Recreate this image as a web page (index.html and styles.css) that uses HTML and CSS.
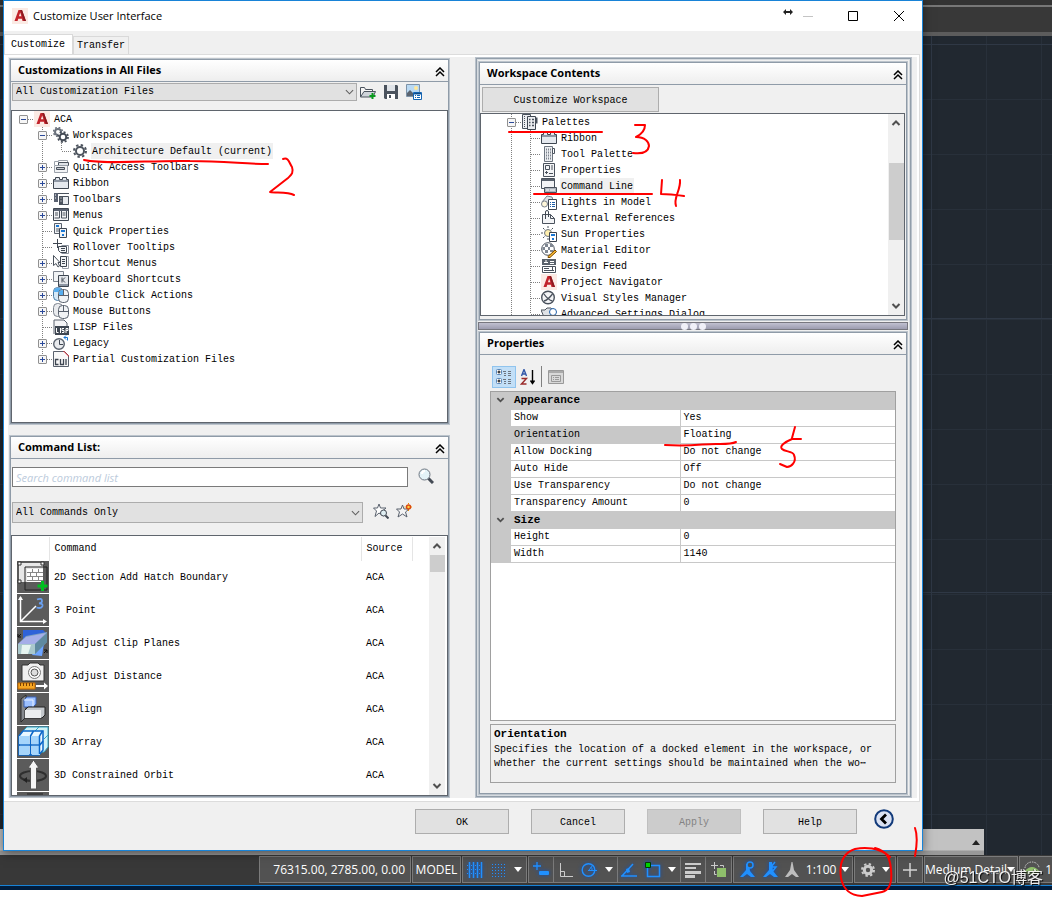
FILE: index.html
```html
<!DOCTYPE html>
<html lang="en">
<head>
  <meta charset="UTF-8">
  <title>Customize User Interface</title>
  <link rel="stylesheet" href="styles.css">
</head>
<body>

  <!-- shared icon shapes -->
  <svg class="sprite" aria-hidden="true">
    <symbol id="i-acad" viewBox="0 0 16 16"><rect width="16" height="16" fill="#fbeae4"/><path d="M2.500 13 6.500 2h3.500l4 11h-3.500l-.6-2.200H6.200L5.600 13zM6.900 8.300h2.500L8.200 4.500z" fill="#c2232b"/><path d="M8.200 2H10l4 11h-2z" fill="#8c1a20"/></symbol>
    <symbol id="i-gear" viewBox="0 0 16 16"><circle cx="8" cy="8" r="4" fill="none" stroke="#4d545e" stroke-width="2"/><circle cx="8" cy="8" r="6" fill="none" stroke="#4d545e" stroke-width="2" stroke-dasharray="2.4 2.310"/></symbol>
    <symbol id="i-chev" viewBox="0 0 10 10"><path d="M1 5l4-4 4 4M1 9l4-4 4 4" fill="none" stroke="#000" stroke-width="1.500"/></symbol>
    <symbol id="i-up" viewBox="0 0 10 10"><path d="M1.500 7 5 3.500 8.500 7" fill="none" stroke="#505050" stroke-width="2"/></symbol>
    <symbol id="i-down" viewBox="0 0 10 10"><path d="M1.500 3 5 6.500 8.500 3" fill="none" stroke="#505050" stroke-width="2"/></symbol>
    <symbol id="i-thin" viewBox="0 0 10 10"><path d="M1 3l4 4 4-4" fill="none" stroke="#606060" stroke-width="1.200"/></symbol>
    <symbol id="i-ribbon" viewBox="0 0 16 16"><path d="M.5 4.500h2v-2h4v2h3v-2h4v2h2v9H.5z" fill="#e4e8ee" stroke="#3e4651"/><path d="M1 5h14v2H1z" fill="#8d96a3"/></symbol>
    <symbol id="i-caret" viewBox="0 0 8 5"><path d="M0 0h8L4 5z" fill="#fff"/></symbol>
  </svg>

  <main class="workspace">
    <div class="app-top"></div>
    <div class="command-bar"><span class="tri"></span></div>

    <section class="dialog">
      <header class="titlebar">
        <svg class="ico"><use href="#i-acad"/></svg>
        <h1>Customize User Interface</h1>
        <svg class="resize" viewBox="0 0 10 8"><path d="M0 4l3-3v2h4V1l3 3-3 3V5H3v2z" fill="#222"/></svg>
        <button class="win" aria-label="Minimize"><svg viewBox="0 0 12 12"><path d="M1 6.500h10" stroke="#c4c4c4"/></svg></button>
        <button class="win" aria-label="Maximize"><svg viewBox="0 0 12 12"><path d="M1.500 1.500h9v9h-9z" fill="none" stroke="#000"/></svg></button>
        <button class="win" aria-label="Close"><svg viewBox="0 0 12 12"><path d="M1 1l10 10M11 1 1 11" stroke="#000"/></svg></button>
      </header>

      <nav class="tabs">
        <button class="tab active">Customize</button>
        <button class="tab">Transfer</button>
      </nav>

      <div class="page">
        <div class="columns">

          <div class="left-col">
            <section class="panel">
              <header class="panel-head"><h2>Customizations in All Files</h2><button aria-label="Collapse"><svg><use href="#i-chev"/></svg></button></header>
              <div class="file-bar">
                <div class="select"><select aria-label="Customization files"><option>All Customization Files</option></select><svg><use href="#i-thin"/></svg></div>
                <button class="tool" aria-label="Open"><svg viewBox="0 0 16 16"><path d="M.5 13V3.500h4l1 2h7v2" fill="#f4f4f4" stroke="#4a525d"/><path d="M.5 13 4 7.500h11.500L13 13z" fill="#cfd4da" stroke="#4a525d"/><path d="M12.500 9v6M9.500 12h6" stroke="#0a9a1e" stroke-width="2"/></svg></button>
                <button class="tool" aria-label="Save"><svg viewBox="0 0 16 16"><path d="M1 1h13l1 1v13H2l-1-1z" fill="#4a525d"/><path d="M4 1h8v6H4z" fill="#dfe3e8"/><path d="M4 10h8v5H4z" fill="#fff"/><path d="M6 11h2v3H6z" fill="#4a525d"/></svg></button>
                <button class="tool" aria-label="Image manager"><svg viewBox="0 0 16 16"><path d="M.5.5h13v12H.5z" fill="#b9d9f3" stroke="#7d93a8"/><path d="M1 9l3-3 4 4v2H1z" fill="#5b6470"/><circle cx="10" cy="4" r="2" fill="#ffe89a"/><path d="M7.500 8.500h8v7h-8z" fill="#fff" stroke="#1565b3"/><path d="M8 9h7v1H8zM9 11.500h1M11 11.500h3M9 13.500h1M11 13.500h3" stroke="#1565b3"/></svg></button>
              </div>
              <div class="tree">
                <ul>
                  <li>
                    <div class="node"><button class="toggle" aria-label="Collapse"></button><i></i><svg><use href="#i-acad"/></svg><span>ACA</span></div>
                    <ul>
                      <li>
                        <div class="node"><button class="toggle" aria-label="Collapse"></button><i></i><svg viewBox="0 0 16 16"><circle cx="5" cy="5" r="3" fill="none" stroke="#6b727d" stroke-width="2"/><circle cx="5" cy="5" r="4.500" fill="none" stroke="#6b727d" stroke-width="1.500" stroke-dasharray="1.800 1.734"/><circle cx="10" cy="10" r="5.500" fill="#fff"/><circle cx="10" cy="10" r="3.300" fill="none" stroke="#454c57" stroke-width="2"/><circle cx="10" cy="10" r="5" fill="none" stroke="#454c57" stroke-width="1.800" stroke-dasharray="2 1.927"/></svg><span>Workspaces</span></div>
                        <ul>
                          <li><div class="node leaf"><i></i><svg><use href="#i-gear"/></svg><span class="picked">Architecture Default (current)</span></div></li>
                        </ul>
                      </li>
                      <li><div class="node"><button class="toggle plus" aria-label="Expand"></button><i></i><svg viewBox="0 0 16 16"><path d="M1.500 6V2.500h4V1.500h9v4" fill="none" stroke="#9aa1aa"/><path d="M5.500 3.500h10v3h-10z" fill="#dfe3e8" stroke="#4a525d"/><path d="M1.500 6.500h13v7h-13z" fill="#f2f3f5" stroke="#9aa1aa"/><path d="M3.500 8.500h8v2h-8z" fill="#c5cad1" stroke="#4a525d"/></svg><span>Quick Access Toolbars</span></div></li>
                      <li><div class="node"><button class="toggle plus" aria-label="Expand"></button><i></i><svg><use href="#i-ribbon"/></svg><span>Ribbon</span></div></li>
                      <li><div class="node"><button class="toggle plus" aria-label="Expand"></button><i></i><svg viewBox="0 0 16 16"><path d="M1 2h4v9H1z" fill="#596170"/><path d="M5 2.500h11" stroke="#4a525d"/><path d="M6.500 5.500h9v8h-9z" fill="#e8ebef" stroke="#4a525d"/><path d="M6 5h4v9H6z" fill="#4a525d"/><path d="M2 4h1M2 7h1M7.500 7h1M7.500 10h1" stroke="#fff"/></svg><span>Toolbars</span></div></li>
                      <li><div class="node"><button class="toggle plus" aria-label="Expand"></button><i></i><svg viewBox="0 0 16 16"><path d="M.5 1.500h15v12H.5z" fill="#f3f4f6" stroke="#3e4651"/><path d="M1 2h14v2H1z" fill="#596170"/><path d="M6.500 4v7h-5M8.500 4v7h5V4M2 6h3M2 8h3M9.500 6h3M9.500 8h3" fill="none" stroke="#4a525d"/></svg><span>Menus</span></div></li>
                      <li><div class="node leaf"><i></i><svg viewBox="0 0 16 16"><path d="M1.500.5h7v10h-7z" fill="#f1f3f5" stroke="#59616d"/><path d="M3 2h3v2H3z" fill="#1976d2"/><path d="M3 6h3M3 8h3" stroke="#59616d"/><path d="M6.500 5.500h7v9h-7z" fill="#f1f3f5" stroke="#3e4651"/><path d="M8 7h4v2H8zM9 11h2v2H9z" fill="#1976d2"/></svg><span>Quick Properties</span></div></li>
                      <li><div class="node leaf"><i></i><svg viewBox="0 0 16 16"><path d="M4.500 0v9M0 4.500h9" stroke="#3e4651"/><path d="M8.500 6.500h7v8h-7" fill="#fff" stroke="#8a919c"/><path d="M5.500 7.500h8v6h-6l-2-2z" fill="#f1f3f5" stroke="#3e4651"/><path d="M8 9.500h4M8 11.500h4" stroke="#3e4651"/></svg><span>Rollover Tooltips</span></div></li>
                      <li><div class="node"><button class="toggle plus" aria-label="Expand"></button><i></i><svg viewBox="0 0 16 16"><path d="M.5.5v10l2.500-2 2 3.500 1.500-1-1.500-3.500h2z" fill="#fff" stroke="#4a525d"/><path d="M9.500 1.500h6v12h-6z" fill="#fff" stroke="#9aa1aa"/><path d="M7.500 1.500h6v10h-6z" fill="#f1f3f5" stroke="#3e4651"/><path d="M9 4.500h3M9 6.500h3M9 8.500h3" stroke="#3e4651"/></svg><span>Shortcut Menus</span></div></li>
                      <li><div class="node"><button class="toggle plus" aria-label="Expand"></button><i></i><svg viewBox="0 0 16 16"><path d="M.5.500h10v10H.5z" fill="#f1f3f5" stroke="#7b828d"/><path d="M5.500 4.500h10v11h-10z" fill="#e4e7eb" stroke="#3e4651"/><path d="M6 13h9v2H6z" fill="#8d96a3"/><path d="M9 6.500v5M12 6.500 9.500 9l2.500 2.500" fill="none" stroke="#3e4651"/></svg><span>Keyboard Shortcuts</span></div></li>
                      <li><div class="node"><button class="toggle plus" aria-label="Expand"></button><i></i><svg viewBox="0 0 16 16"><rect x=".5" y=".5" width="9" height="13" rx="4" fill="#d5e9f8" stroke="#4a7ba5"/><path d="M1 5a4 4 0 0 1 8 0z" fill="#56aef0"/><rect x="5.500" y="2.500" width="10" height="13" rx="4" fill="#f1f3f5" stroke="#59616d"/><path d="M6 8V6a4 3 0 0 1 4-3v5z" fill="#56aef0"/><path d="M6 8.500h9M10.500 3v5" stroke="#59616d"/></svg><span>Double Click Actions</span></div></li>
                      <li><div class="node"><button class="toggle plus" aria-label="Expand"></button><i></i><svg viewBox="0 0 16 16"><rect x=".5" y=".5" width="9" height="13" rx="4" fill="#e9ebee" stroke="#7b828d"/><rect x="5.500" y="2.500" width="10" height="13" rx="4" fill="#f1f3f5" stroke="#59616d"/><path d="M6 8.500h9M10.500 3v5" stroke="#59616d"/></svg><span>Mouse Buttons</span></div></li>
                      <li><div class="node leaf"><i></i><svg viewBox="0 0 16 16"><path d="M1 15V1h10l3 3v3" fill="#f4f4f6" stroke="#59616d"/><path d="M2 7h14v9H2z" fill="#3e4651"/><path d="M3.500 9v4.500h2M7.500 9v5M11 9.500H9v2h2v2H9M13 14V9.500h2v2h-2" fill="none" stroke="#fff"/></svg><span>LISP Files</span></div></li>
                      <li><div class="node"><button class="toggle plus" aria-label="Expand"></button><i></i><svg viewBox="0 0 16 16"><circle cx="6" cy="9" r="5.300" fill="#e9ebee" stroke="#59616d" stroke-width="1.400"/><path d="M6.500 5v4.500H10" fill="none" stroke="#3e4651"/><path d="M11 2.500h3.500v3M13 .500l-2 2 2 2" fill="none" stroke="#1976d2"/></svg><span>Legacy</span></div></li>
                      <li><div class="node"><button class="toggle plus" aria-label="Expand"></button><i></i><svg viewBox="0 0 16 16"><path d="M.5.5h11l4 4v11H.5z" fill="#f8f8f8" stroke="#59616d"/><path d="M10 0h1l5 5v1z" fill="#e02633"/><path d="M5.500 8.500h-3v5h3M7.500 8v5.500h3V8M13 8v6" fill="none" stroke="#3e4651" stroke-width="1.300"/></svg><span>Partial Customization Files</span></div></li>
                    </ul>
                  </li>
                </ul>
              </div>
            </section>

            <section class="panel">
              <header class="panel-head"><h2>Command List:</h2><button aria-label="Collapse"><svg><use href="#i-chev"/></svg></button></header>
              <div class="search-bar">
                <input type="text" placeholder="Search command list" aria-label="Search command list">
                <button class="tool" aria-label="Search"><svg viewBox="0 0 16 16"><path d="M10 10l5 5" stroke="#444b55" stroke-width="3"/><circle cx="6.500" cy="6.500" r="5.500" fill="#e3f3f8" stroke="#6d7580"/><path d="M4 6a3 3 0 0 1 3-3" fill="none" stroke="#fff" stroke-width="2"/></svg></button>
              </div>
              <div class="filter-bar">
                <div class="select"><select aria-label="Command category"><option>All Commands Only</option></select><svg><use href="#i-thin"/></svg></div>
                <button class="tool" aria-label="Find command"><svg viewBox="0 0 16 16"><path d="M6 1l1.500 4H13L9.500 8l1 5L6 10l-4 3.500L3.500 8 .5 5h4z" fill="#fff" stroke="#59616d"/><circle cx="10.500" cy="10" r="3" fill="#dfeef2" stroke="#444b55"/><path d="M12.500 12.500l3 3" stroke="#444b55" stroke-width="2"/></svg></button>
                <button class="tool" aria-label="New command"><svg viewBox="0 0 16 16"><path d="M6.500 2l1.500 4h5L9.500 9l1.500 5-4.500-3L2 14l1.500-5L.5 6H5z" fill="#f4f4f4" stroke="#59616d"/><circle cx="12.500" cy="4" r="2" fill="#ffd23e" stroke="#d9480f" stroke-width="1.500"/><path d="M12.500 0v1M12.500 7v1M8.500 4h1M15 4h1" stroke="#f08c00"/></svg></button>
              </div>
              <div class="list">
                <div class="list-view">
                  <table>
                    <thead>
                      <tr><th class="c-icon"></th><th>Command</th><th class="c-src">Source</th><th class="c-end"></th></tr>
                    </thead>
                    <tbody>
                      <tr><td><svg viewBox="0 0 32 32"><path d="M2 2h24v19H2z" fill="#e8e8e8"/><path d="M1 1h3v3H1zM24 1h3v3h-3zM1 19h3v3H1z" fill="#fff" stroke="#333"/><path d="M8 6h22v23H8z" fill="none" stroke="#222"/><path d="M10 8h16v13H10z" fill="#fff"/><path d="M10 11.500h16M10 15.500h16M10 19.500h16M15.500 8v3M21.500 8v3M13.500 12v3M19.500 12v3M15.500 16v3M21.500 16v3" stroke="#888"/><path d="M25.500 20v10M20.500 25h10" stroke="#00c020" stroke-width="3"/></svg></td><td>2D Section Add Hatch Boundary</td><td>ACA</td><td></td></tr>
                      <tr><td><svg viewBox="0 0 32 32"><path d="M3.500 3v24.500H28M4 27 19 12" fill="none" stroke="#fff" stroke-width="1.500"/><path d="M1 6l2.500-4L6 6zM26 25l4 2.500-4 2.500z" fill="#fff"/><path d="M20 5.500q5-2 5 1.500 0 2-3 2.300 4 .2 3.500 2.700-1 3-6 1.500" fill="none" stroke="#6aa0f0" stroke-width="1.800"/></svg></td><td>3 Point</td><td>ACA</td><td></td></tr>
                      <tr><td><svg viewBox="0 0 32 32"><path d="M6 3h20l3 3-4 22-10-1V12H6z" fill="#2f62d8"/><path d="M15 28l10 1 2-14-7 4z" fill="#6da5ff"/><path d="M1 17 9 9l21-4v10L18 27H1z" fill="#7d9fc0"/><path d="M1 17h17v10H1z" fill="#a9c8cc"/><path d="M1 17 9 10l20-4-11 11z" fill="#a5aee8"/><path d="M18 17 30 6v9L18 27z" fill="#5f8aa0"/><path d="M5 18h9l-3 9H4z" fill="#e6f4f0"/><path d="M4 7 1 10m0-3v3h3M27 26l3-3m0 3v-3h-3" fill="none" stroke="#111"/></svg></td><td>3D Adjust Clip Planes</td><td>ACA</td><td></td></tr>
                      <tr><td><svg viewBox="0 0 32 32"><path d="M5 5h6l2-2h8l2 2h4v16H5z" fill="#f0f0f0" stroke="#333"/><circle cx="17.500" cy="12.500" r="6" fill="#fff" stroke="#777"/><circle cx="17.500" cy="12.500" r="3.500" fill="#ddd" stroke="#555"/><path d="M1 23h17v6H1z" fill="#f5a623" stroke="#c46b00"/><path d="M3.500 23v3M6.500 23v3M9.500 23v3M12.500 23v3M15.500 23v3" stroke="#7a3f00"/><path d="M19 26h10" stroke="#fff" stroke-width="2"/><path d="M27 22.500l4 3.500-4 3.500z" fill="#fff"/></svg></td><td>3D Adjust Distance</td><td>ACA</td><td></td></tr>
                      <tr><td><svg viewBox="0 0 32 32"><path d="M4 6l5-4v22l-5 5z" fill="#85898e" stroke="#2b2b2b"/><path d="M7 7l3-3h9v7l-3 3H7z" fill="#9cc0ff" stroke="#3b62b8"/><path d="M7 7h9v7" fill="none" stroke="#e8f0ff"/><path d="M8 17l3-3h17v8l-3 3H8z" fill="#c4c8cc" stroke="#222"/><path d="M8 17h16v8H8z" fill="#eceeef"/></svg></td><td>3D Align</td><td>ACA</td><td></td></tr>
                      <tr><td><svg viewBox="0 0 32 32"><path d="M6 5l4-4h21v20l-4 5H10z" fill="#cff1f5" stroke="#31a5c8"/><path d="M18 5l4-4M27 13l4-4" stroke="#31a5c8"/><path d="M2 10l4-5h20v19l-4 5H2z" fill="#e9f7ff" stroke="#0a66c8" stroke-width="1.500"/><path d="M2 10h10v8H2zM15 10h8v8h-8zM2 20h10v9H2zM15 20h8v9h-8z" fill="#a5d5fb"/><path d="M2 19h21l3-4M13.500 29V10l3-5M22.500 28V10l3-5" fill="none" stroke="#0a66c8" stroke-width="1.500"/></svg></td><td>3D Array</td><td>ACA</td><td></td></tr>
                      <tr><td><svg viewBox="0 0 32 32"><ellipse cx="16" cy="17" rx="13" ry="5" fill="none" stroke="#2f2f2f" stroke-width="2"/><path d="M13.500 30V9H11l5.500-8L22 9h-2.500v21z" fill="#f5f5f5" stroke="#555"/><path d="M6 21l4-3v6z" fill="#222"/></svg></td><td>3D Constrained Orbit</td><td>ACA</td><td></td></tr>
                      <tr><td><svg viewBox="0 0 32 32"><path d="M10 2h16" stroke="#222"/></svg></td><td></td><td></td><td></td></tr>
                    </tbody>
                  </table>
                </div>
                <div class="scroll cmd-scroll"><svg><use href="#i-up"/></svg><div class="thumb"></div><svg><use href="#i-down"/></svg></div>
              </div>
            </section>
          </div>

          <div class="right-col">
            <section class="panel contents">
              <header class="panel-head"><h2>Workspace Contents</h2><button aria-label="Collapse"><svg><use href="#i-chev"/></svg></button></header>
              <button class="btn wide">Customize Workspace</button>
              <div class="tree palettes">
                <ul>
                  <li>
                    <div class="node"><button class="toggle" aria-label="Collapse"></button><i></i><svg viewBox="0 0 16 16"><path d="M.5.5h8v14h-8z" fill="#eceef1" stroke="#4a525d"/><path d="M2.500 2v11" stroke="#4a525d" stroke-dasharray="1 1"/><path d="M5.500 2.500h8v13h-8z" fill="#eceef1" stroke="#3e4651"/><path d="M13.500 3.500h2v6h-2z" fill="#4a525d"/><path d="M7 5.500h1.500M10 5.500h2M7 8.500h1.500M10 8.500h2M7 11.500h1.500M10 11.500h2" stroke="#4a525d" stroke-width="1.500"/></svg><span>Palettes</span></div>
                    <ul>
                      <li><div class="node leaf"><i></i><svg><use href="#i-ribbon"/></svg><span>Ribbon</span></div></li>
                      <li><div class="node leaf"><i></i><svg viewBox="0 0 16 16"><path d="M3.500.5h8v15h-8z" fill="#eceef1" stroke="#6d7580"/><path d="M11.500 2.500h2v5h-2z" fill="#fff" stroke="#4a525d"/><path d="M5 3.500h1M7 3.500h1M9 3.500h1M5 6.500h1M7 6.500h1M9 6.500h1M5 9.500h1M7 9.500h1M9 9.500h1M5 12.500h1M7 12.500h1M9 12.500h1" stroke="#7b828d" stroke-width="2"/></svg><span>Tool Palette</span></div></li>
                      <li><div class="node leaf"><i></i><svg viewBox="0 0 16 16"><path d="M2.500 1.500h11v13h-11z" fill="#f3f4f6" stroke="#4a525d"/><path d="M4.500 3.500h4v4h-4zM11 3v5M4 10.500h3M5.500 9v3M8 11.500h4" fill="none" stroke="#4a525d"/></svg><span>Properties</span></div></li>
                      <li><div class="node leaf"><i></i><svg viewBox="0 0 16 16"><path d="M.5.5h13v10H.5z" fill="#f3f4f6" stroke="#4a525d"/><path d="M1 1h12v2H1z" fill="#59616d"/><path d="M3.500 9.500h12v5h-12z" fill="#aeb4bd" stroke="#4a525d"/><path d="M5 12h3M9 12h5" stroke="#fff"/></svg><span class="picked">Command Line</span></div></li>
                      <li><div class="node leaf"><i></i><svg viewBox="0 0 16 16"><path d="M1 8l5-6 5 1 1 3-7 5z" fill="#dfe2e6" stroke="#7b828d"/><circle cx="3.500" cy="10" r="3" fill="#fff7da" stroke="#7b828d"/><path d="M7.500 5.500h8v10h-8z" fill="#fff" stroke="#3e4651"/><path d="M9 8.500h1M11 8.500h3M9 10.500h1M11 10.500h3M9 12.500h1M11 12.500h3" stroke="#1f5fa8"/></svg><span>Lights in Model</span></div></li>
                      <li><div class="node leaf"><i></i><svg viewBox="0 0 16 16"><path d="M1.500 4.500h8l4 4v5h-12z" fill="#f3f4f6" stroke="#4a525d"/><path d="M9.500 4.500v4h4" fill="none" stroke="#4a525d"/><path d="M4.500 9V2a1.500 1.500 0 0 1 3 0v5" fill="none" stroke="#3e4651"/></svg><span>External References</span></div></li>
                      <li><div class="node leaf"><i></i><svg viewBox="0 0 16 16"><circle cx="7" cy="7" r="3.500" fill="#ffefae" stroke="#6d7580"/><path d="M7 0v2M0 7h2M2 2l1.500 1.500M12 2l-1.500 1.500M2 12l1.500-1.500M7 12v2" stroke="#4a525d"/><path d="M8.500 6.500h7v9h-7z" fill="#fff" stroke="#3e4651"/><path d="M10 8h4v2h-4zM11 12h2v2h-2z" fill="#1976d2"/></svg><span>Sun Properties</span></div></li>
                      <li><div class="node leaf"><i></i><svg viewBox="0 0 16 16"><circle cx="7" cy="7" r="6.300" fill="#fff" stroke="#4a525d"/><path d="M4 2h3v3H4zM9 2h3v3H9zM1.500 5H4v3H1.500zM7 5h2v3H7zM4 8h3v3H4zM9 8h3v2H9z" fill="#7f8792"/><path d="M7 14.500 14 8l1.500 1.500L9 15.500H7z" fill="#f7b733" stroke="#7a4b00"/></svg><span>Material Editor</span></div></li>
                      <li><div class="node leaf"><i></i><svg viewBox="0 0 16 16"><path d="M1 1h14v6H1z" fill="#59616b"/><path d="M3 4.500h4M5 2v3M9 3.500h4M9 5.500h4" stroke="#fff"/><path d="M1.500 8.500h13v6h-13z" fill="#fff" stroke="#4a525d"/><path d="M3 10.500h5M3 12.500h10M11.500 9v3" stroke="#4a525d"/></svg><span>Design Feed</span></div></li>
                      <li><div class="node leaf"><i></i><svg><use href="#i-acad"/></svg><span>Project Navigator</span></div></li>
                      <li><div class="node leaf"><i></i><svg viewBox="0 0 16 16"><circle cx="7" cy="7.500" r="6.300" fill="#f3f4f6" stroke="#4a525d" stroke-width="1.400"/><path d="M3 4q4 6 8.500 7M11.500 4Q7 10 3 11" fill="none" stroke="#4a525d" stroke-width="1.300"/></svg><span>Visual Styles Manager</span></div></li>
                      <li><div class="node leaf"><i></i><svg viewBox="0 0 16 16"><path d="M0 4h4l2-2h4l3 3v6H3z" fill="#dfe2e6" stroke="#4a525d"/><circle cx="12" cy="6" r="3.500" fill="#fff" stroke="#1f5fa8"/></svg><span>Advanced Settings Dialog</span></div></li>
                    </ul>
                  </li>
                  <li><div class="node leaf"><i></i></div></li>
                </ul>
                <div class="scroll tree-scroll"><svg><use href="#i-up"/></svg><div class="thumb"></div><svg><use href="#i-down"/></svg></div>
              </div>
            </section>

            <div class="splitter"><b></b><b></b><b></b></div>

            <section class="panel props">
              <header class="panel-head"><h2>Properties</h2><button aria-label="Collapse"><svg><use href="#i-chev"/></svg></button></header>
              <div class="props-body">
                <div class="props-tools">
                  <button class="on" aria-label="Categorized"><svg viewBox="0 0 16 16"><rect x=".5" y=".5" width="5" height="5" rx="1" fill="#fff" stroke="#5b87b8"/><rect x=".5" y="9.500" width="5" height="5" rx="1" fill="#fff" stroke="#5b87b8"/><path d="M1.500 3h3M3 1.500v3M1.500 12h3M3 10.500v3" stroke="#000"/><path d="M7 2.500h3M12 2.500h3M8 4.500h2M12 4.500h3M8 6.500h2M12 6.500h3M7 10.500h3M12 10.500h3M8 12.500h2M12 12.500h3M8 14.500h2M12 14.500h3" stroke="#6d7580"/></svg></button>
                  <button aria-label="Alphabetical"><svg viewBox="0 0 16 16"><path d="M1.500 7 4 .5 6.500 7M2.500 5h3" fill="none" stroke="#3156a8" stroke-width="1.400"/><path d="M1.500 9.500h5l-5 5.500h5" fill="none" stroke="#9a2b2b" stroke-width="1.400"/><path d="M12.500 1v13M10.500 11.500l2 3 2-3" fill="none" stroke="#000" stroke-width="1.400"/></svg></button>
                  <span class="sep"></span>
                  <button aria-label="Property pages" disabled><svg viewBox="0 0 16 16"><path d="M.5 1.500h15v13H.5z" fill="#d8d8d8" stroke="#999"/><path d="M1 2h14v2H1z" fill="#aaa"/><path d="M3.500 6.500h9v6h-9zM5 8.500h1M7 8.500h4M5 10.500h1M7 10.500h4" fill="none" stroke="#999"/></svg></button>
                </div>
                <div class="prop-grid">
                  <table>
                    <colgroup><col class="p-mark"><col class="p-name"><col></colgroup>
                    <tr class="cat"><td><svg><use href="#i-down"/></svg></td><th colspan="2">Appearance</th></tr>
                    <tr><td></td><th>Show</th><td>Yes</td></tr>
                    <tr class="current"><td></td><th>Orientation</th><td>Floating</td></tr>
                    <tr><td></td><th>Allow Docking</th><td>Do not change</td></tr>
                    <tr><td></td><th>Auto Hide</th><td>Off</td></tr>
                    <tr><td></td><th>Use Transparency</th><td>Do not change</td></tr>
                    <tr><td></td><th>Transparency Amount</th><td>0</td></tr>
                    <tr class="cat"><td><svg><use href="#i-down"/></svg></td><th colspan="2">Size</th></tr>
                    <tr><td></td><th>Height</th><td>0</td></tr>
                    <tr><td></td><th>Width</th><td>1140</td></tr>
                  </table>
                </div>
                <div class="prop-help">
                  <h3>Orientation</h3>
                  <p>Specifies the location of a docked element in the workspace, or<br>whether the current settings should be maintained when the wo⋯</p>
                </div>
              </div>
            </section>
          </div>

        </div>
      </div>

      <footer class="actions">
        <button class="btn">OK</button>
        <button class="btn">Cancel</button>
        <button class="btn" disabled>Apply</button>
        <button class="btn">Help</button>
        <button class="round" aria-label="Less"><svg viewBox="0 0 20 20"><circle cx="10" cy="10" r="8.800" fill="#dbe2f3" stroke="#123a7a" stroke-width="2"/><path d="M12 5.500 7.500 10l4.500 4.500" fill="none" stroke="#000" stroke-width="2.800"/></svg></button>
      </footer>
    </section>
  </main>

  <footer class="status">
    <div class="cell coords">76315.00, 2785.00, 0.00</div>
    <div class="cell model">MODEL</div>
    <div class="cell grids">
      <svg class="glow" viewBox="0 0 16 16"><path d="M2.500 0v16M6.500 0v16M10.500 0v16M14.500 0v16" stroke="#2090ff" stroke-width="1.500"/><path d="M0 3.500h16M0 7.500h16M0 11.500h16" stroke="#2090ff" stroke-dasharray="1 1"/></svg>
      <svg class="glow" viewBox="0 0 16 16"><path d="M1 2.500h14M1 5.500h14M1 8.500h14M1 11.500h14M1 14.500h14" stroke="#2090ff" stroke-dasharray="1 2"/></svg>
      <svg class="caret"><use href="#i-caret"/></svg>
    </div>
    <div class="cell tools">
      <span class="t1"><svg class="glow" viewBox="0 0 16 16"><path d="M4 0v8M0 4h8" stroke="#2090ff" stroke-width="1.300"/><rect x="6" y="9" width="10" height="4" rx="1" fill="#2090ff"/></svg></span>
      <span class="t2"><svg viewBox="0 0 16 16"><path d="M2.500 1v13.500H15M2.500 9.500h4v5" fill="none" stroke="#ccc"/></svg><svg class="glow" viewBox="0 0 16 16"><circle cx="7.500" cy="8" r="6.300" fill="none" stroke="#2090ff" stroke-width="1.400"/><path d="M7 8.500h9M8 8l4-5M9.500 5q2 1 1.500 3.500" fill="none" stroke="#2090ff"/></svg><svg class="caret"><use href="#i-caret"/></svg></span>
      <span class="t3"><svg class="glow" viewBox="0 0 16 16"><path d="M0 14h16M1 14 12 2" stroke="#2090ff" stroke-width="1.500"/><path d="M5 7l3-1 1 4-3 1z" fill="#2090ff"/></svg><svg class="glow" viewBox="0 0 16 16"><path d="M2.500 3.500h12v11h-12z" fill="none" stroke="#2090ff" stroke-width="1.500"/><path d="M.5.5h5v5h-5z" fill="#00d000" stroke="#003a00"/></svg><svg class="caret"><use href="#i-caret"/></svg></span>
      <span class="t1"><svg viewBox="0 0 16 16"><path d="M0 2h16M0 6h11" stroke="#ccc" stroke-width="2"/><path d="M0 10.500h16M0 14.500h10" stroke="#ccc" stroke-width="3"/></svg></span>
      <span class="t1"><svg viewBox="0 0 16 16"><path d="M3.500 0v7M0 3.500h7M9 3.500h3.500v2M3.500 9v3.500h2" fill="none" stroke="#ccc"/><path d="M6 6h9v9H6z" fill="#8fbf6b"/></svg></span>
    </div>
    <div class="cell scale">
      <svg class="glow" viewBox="0 0 18 18"><path d="M8 3v6l-6 7h3l4-3 4 3h4l-5-6-1-7z" fill="#2090ff"/><circle cx="12" cy="4" r="3" fill="#44505c" stroke="#2090ff" stroke-width="1.500"/></svg>
      <svg class="glow" viewBox="0 0 18 18"><path d="M8 1v8l-6 7h3l4-3 4 3h4l-5-6-1-9z" fill="#2090ff"/><path d="M14 1l-4 5h5l-4 5" fill="none" stroke="#2090ff" stroke-width="1.500"/></svg>
      <svg viewBox="0 0 18 18"><path d="M8.500 1 7 9l-5 7h3l4-3 4 3h3l-5-7-1.500-8z" fill="#bdbdbd"/></svg>
      <span>1:100</span>
      <svg class="caret"><use href="#i-caret"/></svg>
    </div>
    <div class="cell switch">
      <svg viewBox="0 0 16 16"><circle cx="8" cy="8" r="3.700" fill="none" stroke="#ccc" stroke-width="3"/><circle cx="8" cy="8" r="6" fill="none" stroke="#ccc" stroke-width="2" stroke-dasharray="2.400 2.310"/></svg>
      <svg class="caret"><use href="#i-caret"/></svg>
    </div>
    <div class="cell add"><svg viewBox="0 0 16 16"><path d="M8 1v14M1 8h14" stroke="#d4d4d4" stroke-width="1.500"/></svg></div>
    <div class="cell detail"><span>Medium Detail</span><svg class="caret"><use href="#i-caret"/></svg></div>
    <div class="cell isolate"><svg viewBox="0 0 18 18"><path d="M2 7a7 6 0 0 1 14 0" fill="none" stroke="#ccc" stroke-dasharray="1.500 1"/><path d="M1 11q8-10 16 0-8 5-16 0z" fill="#8fbf6b"/></svg><span>1</span></div>
  </footer>
  <div class="taskbar"></div>

  <!-- hand-drawn marks -->
  <svg class="marks" viewBox="0 0 1052 897" fill="none" stroke="#f00" stroke-width="2" stroke-linecap="round" stroke-linejoin="round">
    <path d="M84 160C110 165 150 160 190 161 225 161 245 164 268 164"/>
    <path d="M283 159C289 157 289 163 292 167 294 173 291 175 288 178L270 192C276 193 288 192 294 195"/>
    <path d="M509 132H602M534 194H652"/>
    <path d="M635 125H645C645 130 642 134 636 137 645 137 649 142 649 146 648 153 641 154 633 153"/>
    <path d="M662 180 661 194C669 194 677 195 684 196M680 180C681 190 673 198 676 206"/>
    <path d="M665 445C695 447 705 443 720 444 728 444 732 444 736 442"/>
    <path d="M795 427 792 438M801 439H792C785 442 779 446 782 449 785 452 793 451 794 455 797 462 791 467 787 467L780 464"/>
    <path d="M915 828C918 836 917 845 915 856"/>
    <path d="M875 848C885 851 890 855 891 870 892 880 891 890 882 892L862 896C848 895 843 888 841 878 839 864 843 853 855 849 864 847 880 847 890 857"/>
  </svg>
  <div class="watermark">@51CTO博客</div>

</body>
</html>
```

FILE: styles.css
```css
* {
  box-sizing: border-box;
}
body {
  margin: 0;
  height: 100vh;
  padding-bottom: 7px;
  display: flex;
  flex-direction: column;
  position: relative;
  overflow: hidden;
  background: #fff;
  color: #000;
  font: 10px/16px 'Liberation Mono', monospace;
}
h1, h2, h3, p, ul {
  margin: 0;
  padding: 0;
}
ul {
  list-style: none;
}
button {
  padding: 0;
  border: 0;
  background: none;
  color: inherit;
  font: inherit;
}
svg {
  display: block;
  flex: none;
  width: 16px;
  height: 16px;
}
.sprite {
  position: absolute;
  width: 0;
  height: 0;
}
table {
  border-collapse: collapse;
  table-layout: fixed;
  width: 100%;
}
th, td {
  padding: 0;
  text-align: left;
  font-weight: normal;
}

/* drawing area behind the dialog */
.workspace {
  flex: 1;
  min-height: 0;
  position: relative;
  display: flex;
  flex-direction: column;
  justify-content: space-between;
  background-color: #212830;
  background-image:
    linear-gradient(#2f3845 1px, transparent 1px),
    linear-gradient(90deg, #2f3845 1px, transparent 1px),
    linear-gradient(#28303a 1px, transparent 1px),
    linear-gradient(90deg, #28303a 1px, transparent 1px);
  background-size: 100% 274px, 274px 100%, 100% 55px, 55px 100%;
  background-position: 0 44px, 109px 0, 0 44px, 51px 0;
}
.app-top {
  height: 36px;
  border-bottom: 4px solid #5c5c5c;
  background: linear-gradient(#333 5px, #777 5px, #777 7px, #383838 7px);
}
.command-bar {
  height: 26px;
  margin-right: 68px;
  display: flex;
  align-items: center;
  justify-content: flex-end;
  padding-right: 4px;
  background: linear-gradient(#c2c2c2 21px, #999 22px);
}
.tri {
  border: 4px solid transparent;
  border-bottom: 5px solid #222;
  border-top: 0;
}

/* dialog window */
.dialog {
  position: absolute;
  top: 0;
  left: 3px;
  right: 129px;
  bottom: 4px;
  display: flex;
  flex-direction: column;
  border: 1px solid #1883d7;
  background: #f0f0f0;
  box-shadow: 0 2px 10px rgba(0, 0, 0, 0.5);
}
.titlebar {
  height: 30px;
  flex: none;
  display: flex;
  align-items: center;
  padding-left: 8px;
  background: #fff;
}
.titlebar h1 {
  flex: 1;
  margin-left: 5px;
  font: 11px/16px 'Open Sans', sans-serif;
}
.titlebar .resize {
  width: 10px;
  height: 8px;
  margin-bottom: 8px;
}
.win {
  width: 46px;
  display: flex;
  justify-content: center;
}
.win svg {
  width: 12px;
  height: 12px;
}
.win:first-of-type {
  width: 30px;
  margin-right: 7px;
}
.tabs {
  height: 23px;
  flex: none;
  display: flex;
  align-items: flex-end;
}
.tab {
  height: 18px;
  padding: 0 3px;
  border: 1px solid #d9d9d9;
  border-bottom: 0;
}
.tab.active {
  height: 20px;
  padding: 0 7px 0 6px;
  background: #fff;
}
.page {
  flex: 1;
  min-height: 0;
  margin-right: 2px;
  padding: 2px 2px 3px 4px;
  border: 1px solid #dcdcdc;
  border-left: 0;
  background: #fff;
}
.columns {
  height: 100%;
  display: grid;
  grid-template-columns: 441fr 437fr;
  grid-template-rows: 100%;
  gap: 25px;
  padding: 0 5px 0 1px;
  background: #f0f0f0;
}
.left-col {
  min-height: 0;
  display: grid;
  grid-template-rows: 367fr 363fr;
  gap: 10px;
  padding-top: 1px;
}
.right-col {
  min-width: 0;
  display: flex;
  flex-direction: column;
  gap: 1px;
  padding: 3px 3px 2px 2px;
  border: 1px solid #b9c1ca;
  box-shadow: inset 0 0 0 1px #929eaa, inset 0 0 0 2px #d6dbe0;
}
.panel {
  min-height: 0;
  display: flex;
  flex-direction: column;
  padding: 1px;
  border: 1px solid #bcc4cc;
  box-shadow: inset 0 0 0 1px #8f9ba8;
}
.panel-head {
  height: 22px;
  flex: none;
  display: flex;
  align-items: center;
  justify-content: space-between;
  padding: 0 3px 2px 7px;
  border-bottom: 1px solid #8f9ba8;
  background: linear-gradient(#fff, #eee);
}
.panel-head h2 {
  font: bold 11px/16px 'Open Sans', sans-serif;
}
.panel-head svg {
  width: 10px;
  height: 10px;
  margin-top: 4px;
}
.contents {
  flex: 259;
}
.props {
  flex: 465;
}

/* drop-downs and small tool buttons */
.file-bar, .search-bar, .filter-bar {
  flex: none;
  display: flex;
  align-items: flex-start;
}
.file-bar {
  height: 28px;
  padding: 1px 26px 0 1px;
  gap: 7px;
}
.select {
  flex: 1;
  position: relative;
  margin-right: -4px;
}
.select select {
  appearance: none;
  display: block;
  width: 100%;
  height: 18px;
  padding: 0 0 0 3px;
  border: 1px solid #acacac;
  border-radius: 0;
  background: #e1e1e1;
  color: #000;
  font: inherit;
}
.select svg {
  position: absolute;
  top: 4px;
  right: 3px;
  width: 9px;
  height: 10px;
}
.tool {
  margin-top: 1px;
}
.search-bar {
  margin-top: 8px;
  padding: 0 14px 0 1px;
  gap: 10px;
}
.search-bar input {
  flex: 1;
  height: 20px;
  padding: 0 3px;
  border: 1px solid #7a7a7a;
  background: #fff;
  font: italic 11px/16px 'Open Sans', sans-serif;
}
.search-bar input::placeholder {
  color: #bccbdc;
}
.filter-bar {
  margin: 15px 0 12px;
  padding: 0 36px 0 1px;
  gap: 7px;
}
.filter-bar .select {
  margin-right: 3px;
}
.filter-bar select {
  height: 21px;
}
.filter-bar .select svg {
  top: 6px;
}

/* trees */
.tree {
  flex: 1;
  min-height: 0;
  position: relative;
  overflow: hidden;
  padding-left: 7px;
  border: 1px solid #5f656d;
  background: #fff;
}
.tree li {
  background: linear-gradient(#808080 50%, transparent 50%) 4px 0 / 1px 2px repeat-y;
}
.tree li:last-child {
  background: linear-gradient(#fff, #fff) 0 8px / 9px 100% no-repeat, linear-gradient(#808080 50%, transparent 50%) 4px 0 / 1px 2px repeat-y;
}
.tree > ul > li:only-child {
  background: none;
}
.tree ul ul {
  padding-left: 19px;
}
.node {
  height: 16px;
  display: flex;
  align-items: center;
  white-space: pre;
}
.node i {
  width: 6px;
  height: 1px;
  background: linear-gradient(90deg, #808080 50%, transparent 50%) 0 0 / 2px 1px;
}
.node.leaf i {
  width: 10px;
  margin-left: 5px;
}
.node span {
  height: 16px;
  margin-left: 3px;
  padding: 1px 1px 0;
}
.node .picked {
  background: #f0f0f0;
}
.toggle {
  width: 9px;
  height: 9px;
  border: 1px solid #919191;
  border-radius: 1px;
  background:
    linear-gradient(#2b4a9a, #2b4a9a) center / 5px 1px no-repeat,
    #f6f6f6;
}
.toggle.plus {
  background:
    linear-gradient(#2b4a9a, #2b4a9a) center / 5px 1px no-repeat,
    linear-gradient(#2b4a9a, #2b4a9a) center / 1px 5px no-repeat,
    #f6f6f6;
}
.palettes {
  margin: 1px 1px 3px 0;
  padding-left: 26px;
}

/* scroll bars */
.scroll {
  width: 16px;
  flex: none;
  display: flex;
  flex-direction: column;
  align-items: center;
  background: #f0f0f0;
}
.scroll svg {
  width: 10px;
  height: 10px;
  margin: 4px 0;
}
.thumb {
  width: 15px;
  background: #cdcdcd;
}
.scroll svg:last-child {
  margin-top: auto;
}
.tree-scroll {
  position: absolute;
  top: 0;
  right: 0;
  bottom: 0;
}
.tree-scroll .thumb {
  height: 77px;
  margin-top: 31px;
}
.cmd-scroll {
  margin: 1px 2px 0 0;
}
.cmd-scroll .thumb {
  height: 17px;
}

/* command list */
.list {
  flex: 1;
  min-height: 0;
  display: flex;
  overflow: hidden;
  border: 1px solid #5f656d;
  background: #fff;
}
.list-view {
  flex: 1;
  overflow: hidden;
  padding-top: 1px;
}
.list th {
  height: 24px;
  padding-left: 5px;
  border-right: 1px solid #e5e5e5;
}
.list td {
  height: 33px;
  padding: 0 0 0 5px;
}
.list .c-icon {
  width: 37px;
}
.list .c-src {
  width: 51px;
}
.list .c-end {
  width: 17px;
  border: 0;
}
.list td svg {
  width: 32px;
  height: 32px;
  margin-bottom: 1px;
  background: #5b5b5b;
}

/* right column */
.btn {
  width: 94px;
  height: 25px;
  padding-top: 2px;
  border: 1px solid #adadad;
  background: #e1e1e1;
}
.btn:disabled {
  border-color: #bfbfbf;
  background: #ccc;
  color: #838383;
}
.btn.wide {
  width: 177px;
  flex: none;
  margin: 2px 0 0 2px;
}
.splitter {
  height: 8px;
  flex: none;
  display: flex;
  align-items: center;
  justify-content: center;
  gap: 2px;
  border: 1px solid #77777f;
  background: linear-gradient(#c0c0d0, #9c9cb0);
}
.splitter b {
  width: 7px;
  height: 7px;
  border-radius: 50%;
  background: #f0f0f8;
}
.props-body {
  flex: 1;
  min-height: 0;
  display: flex;
  flex-direction: column;
  padding: 10px;
}
.props-tools {
  display: flex;
  align-items: center;
  height: 26px;
  padding: 0 0 3px 2px;
}
.props-tools button {
  height: 22px;
  padding: 2px 3px;
  border: 1px solid transparent;
}
.props-tools .on {
  border-color: #90c4ee;
  background: #c2dff7;
}
.props-tools button:nth-child(2) {
  padding-right: 1px;
}
.props-tools .sep {
  width: 1px;
  height: 21px;
  margin: 0 2px 0 3px;
  background: #808080;
}
.prop-grid {
  flex: 1;
  min-height: 0;
  border: 1px solid #a0a0a0;
  background: #fff;
}
.prop-grid tr {
  height: 17px;
  border-bottom: 1px solid #c8c8c8;
}
.prop-grid td, .prop-grid th {
  line-height: 16px;
  padding-left: 3px;
}
.prop-grid th {
  border-right: 1px solid #c8c8c8;
}
.p-mark {
  width: 20px;
}
.p-name {
  width: 169px;
}
.prop-grid td:first-child {
  padding-left: 5px;
  background: #c8c8c8;
}
.prop-grid svg {
  width: 9px;
  height: 10px;
}
.prop-grid .cat th, .prop-grid .current th {
  background: #c8c8c8;
}
.prop-grid .cat th, .prop-help h3 {
  font-size: 11px;
  font-weight: bold;
}
.prop-help {
  height: 59px;
  flex: none;
  margin-top: 3px;
  padding: 1px 3px;
  overflow: hidden;
  border: 1px solid #a0a0a0;
  line-height: 14px;
  white-space: nowrap;
}
.prop-help h3 {
  line-height: 17px;
}

/* bottom buttons */
.actions {
  height: 48px;
  flex: none;
  display: flex;
  justify-content: flex-end;
  align-items: flex-start;
  gap: 22px;
  padding: 7px 28px 0 0;
}
.round {
  margin-left: -5px;
}
.round svg {
  width: 20px;
  height: 20px;
}

/* status bar */
.status {
  height: 30px;
  flex: none;
  display: flex;
  gap: 1px;
  padding: 1px 0 2px;
  overflow: hidden;
  background: #383838;
  color: #fff;
  font: 12px/16px 'Open Sans', sans-serif;
}
.cell {
  flex: none;
  display: flex;
  align-items: center;
  border: 1px solid #7b7b7b;
  background: #525252;
  white-space: nowrap;
}
.cell .caret {
  width: 8px;
  height: 5px;
}
.glow {
  filter: drop-shadow(0 0 2px #0a50c0);
}
.coords {
  width: 152px;
  justify-content: flex-end;
  margin-left: auto;
  padding-right: 5px;
}
.model {
  width: 49px;
  justify-content: center;
}
.grids {
  width: 65px;
  justify-content: space-between;
  padding: 0 4px;
}
.tools {
  width: 204px;
}
.tools span {
  height: 100%;
  display: flex;
  align-items: center;
  justify-content: space-around;
  border-right: 1px solid #7b7b7b;
}
.tools span:last-child {
  border: 0;
}
.t1 {
  width: 25px;
}
.t2, .t3 {
  width: 64px;
}
.scale {
  width: 120px;
  justify-content: space-between;
  padding: 0 3px 0 4px;
}
.scale svg:not(.caret), .isolate svg {
  width: 18px;
  height: 18px;
}
.switch {
  width: 42px;
  justify-content: space-between;
  padding: 0 5px;
}
.add {
  width: 26px;
  justify-content: center;
}
.detail {
  width: 94px;
  justify-content: space-between;
  padding-right: 3px;
}
.isolate {
  width: 33px;
  overflow: hidden;
  justify-content: space-between;
  border-right: 0;
  padding-left: 3px;
}
.taskbar {
  height: 5px;
  flex: none;
  border-top: 1px solid #1883d7;
  background: #001c3c;
}

/* overlays */
.marks {
  position: absolute;
  top: 0;
  left: 0;
  width: 1052px;
  height: 897px;
  pointer-events: none;
}
.watermark {
  position: absolute;
  right: 9px;
  bottom: 7px;
  color: #fff;
  font: 16px/24px 'Liberation Sans', 'Noto Sans CJK SC', sans-serif;
  opacity: 0.9;
  text-shadow: 1px 1px 1px #000, -1px 0 1px #555;
}
```
